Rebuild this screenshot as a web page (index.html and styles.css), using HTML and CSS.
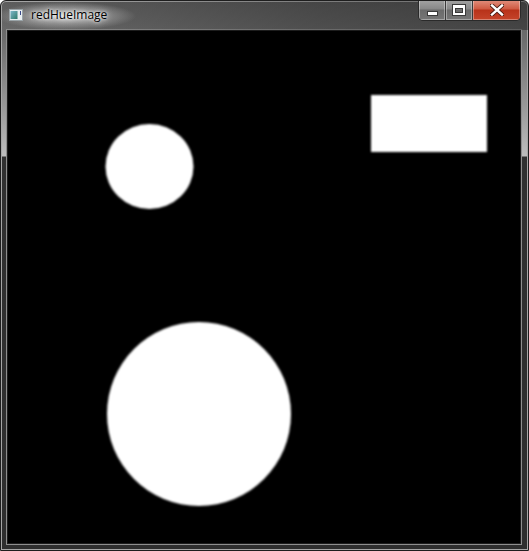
FILE: index.html
```html
<!DOCTYPE html>
<html>
<head>
<meta charset="utf-8">
<link rel="stylesheet" href="styles.css">
</head>
<body>
<div class="window">
  <div class="titlebar">
    <svg class="appicon" width="14" height="12" viewBox="0 0 14 12">
      <defs>
        <linearGradient id="ig" x1="0" y1="0" x2="1" y2="1">
          <stop offset="0" stop-color="#7fb7c9"/>
          <stop offset="1" stop-color="#2f7a6a"/>
        </linearGradient>
      </defs>
      <rect x="0.5" y="0.5" width="13" height="11" fill="#e8eef0" stroke="#9aa4a8"/>
      <rect x="1.5" y="2" width="7" height="8" fill="url(#ig)"/>
      <rect x="11" y="2" width="1" height="4" fill="#3a4a8a"/>
    </svg>
    <span class="title">redHueImage</span>
    <div class="controls">
      <div class="btn minbtn"><span class="minglyph"></span></div>
      <div class="btn maxbtn"><span class="maxglyph"></span></div>
      <div class="btn closebtn">
        <svg width="14" height="12" viewBox="0 0 14 12">
          <path d="M2 1.5 L12 10.5 M12 1.5 L2 10.5" stroke="#4a1a10" stroke-width="4.2" stroke-linecap="square"/>
          <path d="M2 1.5 L12 10.5 M12 1.5 L2 10.5" stroke="#ffffff" stroke-width="2.4" stroke-linecap="square"/>
        </svg>
      </div>
    </div>
  </div>
  <div class="client">
    <svg width="512" height="512" viewBox="0 0 512 512">
      <defs>
        <filter id="soft" x="-10%" y="-10%" width="120%" height="120%">
          <feGaussianBlur stdDeviation="1.1"/>
        </filter>
      </defs>
      <rect width="512" height="512" fill="#000"/>
      <g fill="#fff" filter="url(#soft)">
        <rect x="363" y="64" width="116" height="57"/>
        <ellipse cx="141.5" cy="135.5" rx="44" ry="42.5"/>
        <circle cx="191" cy="383" r="92"/>
      </g>
    </svg>
  </div>
</div>
</body>
</html>
```
FILE: styles.css
```css
html, body {
  margin: 0;
  padding: 0;
  background: #ffffff;
}
.window {
  width: 529px;
  height: 551px;
  box-sizing: border-box;
  border: 1px solid #1e1e1e;
  border-radius: 6px 6px 0 0;
  box-shadow: inset 0 0 0 1px #a6a6a6;
  background: linear-gradient(to bottom, #5c5c5c 0px, #6e6e6e 40px, #9c9c9c 110px, #bdbdbd 155px, #303030 156px, #2e2e2e 100%);
  padding: 0 8px 7px 7px;
  display: flex;
  flex-direction: column;
  position: relative;
  overflow: hidden;
}
.titlebar {
  height: 30px;
  display: flex;
  align-items: flex-start;
  position: relative;
  background: radial-gradient(ellipse 70px 14px at 65px 15px, rgba(235,235,235,0.85) 0%, rgba(200,200,200,0.45) 55%, rgba(120,120,120,0) 100%),
              linear-gradient(100deg, rgba(0,0,0,0) 0, rgba(0,0,0,0.25) 60%, rgba(0,0,0,0.35) 100%);
  margin: 0 -8px 0 -7px;
  padding: 0 8px 0 7px;
}
.appicon {
  margin-top: 8px;
  margin-left: 1px;
  flex: none;
}
.title {
  font-family: "Segoe UI", "Open Sans", "Noto Sans", sans-serif;
  font-size: 12px;
  color: #000;
  margin-left: 8px;
  margin-top: 6px;
  line-height: 16px;
  text-shadow: 0 0 6px rgba(255,255,255,0.9), 0 0 3px rgba(255,255,255,0.9);
}
.controls {
  margin-left: auto;
  display: flex;
  margin-right: -1px;
  margin-top: -1px;
  height: 20px;
  border: 1px solid #2a2a2a;
  border-top: none;
  border-radius: 0 0 5px 5px;
  overflow: hidden;
}
.btn {
  height: 20px;
  display: flex;
  align-items: center;
  justify-content: center;
  box-sizing: border-box;
  box-shadow: inset 0 0 0 1px rgba(255,255,255,0.35);
}
.minbtn, .maxbtn {
  width: 27px;
  background: linear-gradient(to bottom, #a4a4a4 0%, #888 45%, #6a6a6a 50%, #767676 100%);
  border-right: 1px solid #3a3a3a;
}
.closebtn {
  width: 47px;
  background: linear-gradient(to bottom, #e2907e 0%, #cf5a42 45%, #b8321a 50%, #c5442a 100%);
}
.minglyph {
  width: 9px;
  height: 3px;
  background: #fff;
  border: 1px solid #3a3a3a;
  margin-top: 7px;
}
.maxglyph {
  width: 8px;
  height: 5px;
  border: 2px solid #fff;
  border-top-width: 3px;
  box-shadow: 0 0 0 1px #3a3a3a, inset 0 0 0 1px #3a3a3a;
  margin-top: 0px;
}
.client {
  width: 512px;
  height: 512px;
  margin-top: 1px;
  background: #000;
  box-shadow: 0 0 0 1px #1c1c1c, 0 0 0 2px #8e8e8e;
}
.client svg {
  display: block;
}
```
